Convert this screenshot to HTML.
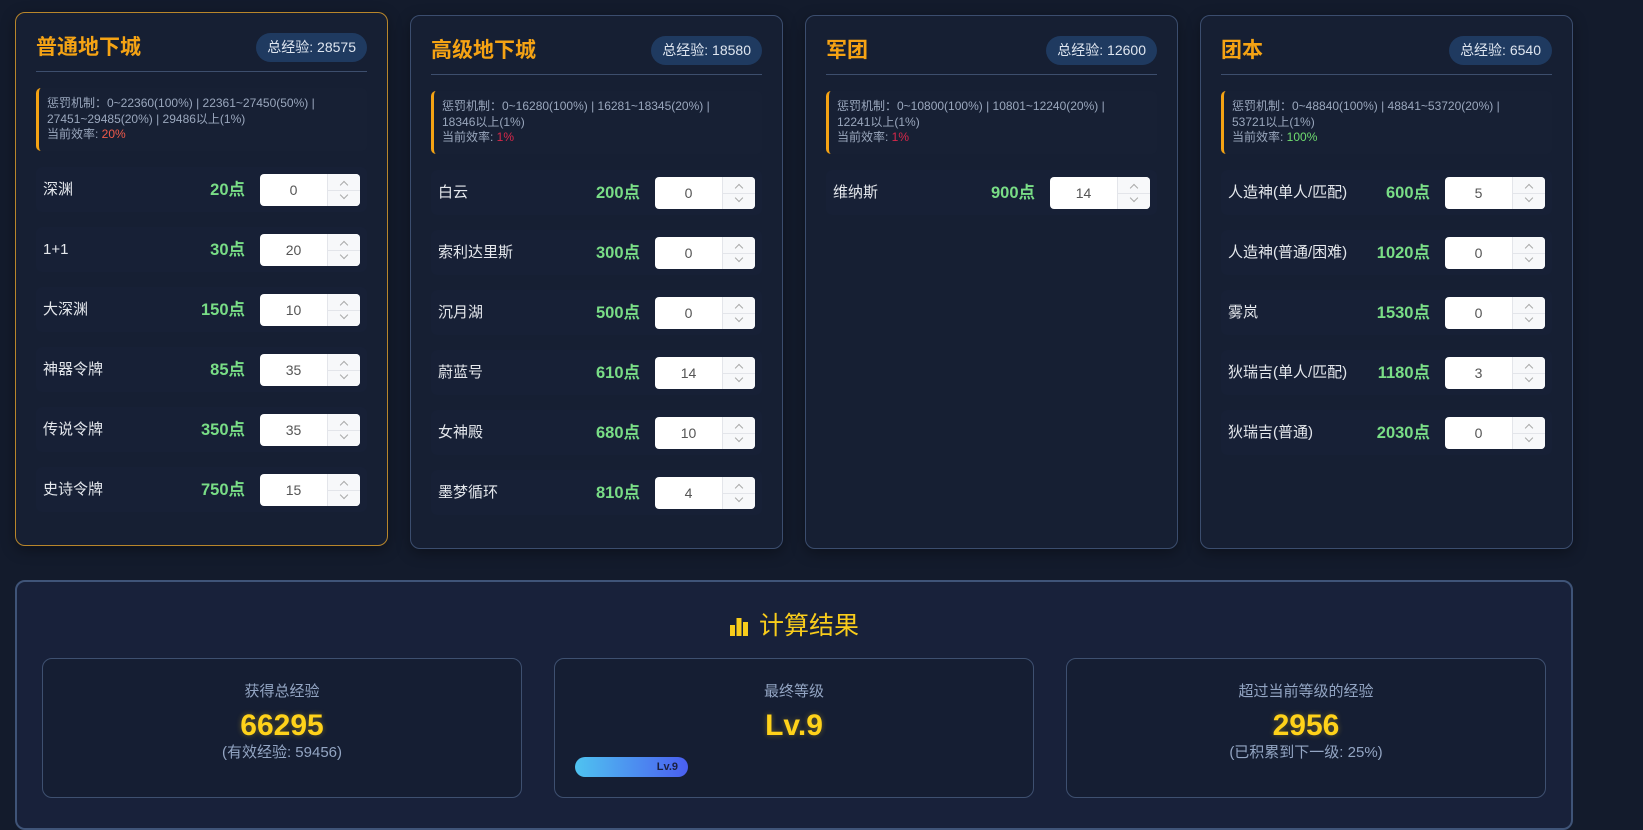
<!DOCTYPE html>
<html><head><meta charset="utf-8"><style>
*{box-sizing:border-box;margin:0;padding:0}
body{width:1643px;height:808px;overflow:hidden;background:#131b2c;font-family:"Liberation Sans","Noto Sans CJK SC",sans-serif;position:relative;color:#e6e9ef}
.card{position:absolute;top:15px;width:373px;height:534px;background:#161f33;border:1px solid #3b4d6e;border-radius:10px;padding:0 20px;box-shadow:0 4px 14px rgba(0,0,0,.35)}
.card.hov{top:12px;border-color:#b8862b}
.hd{height:59px;border-bottom:1px solid #3d4e6d;position:relative}
.t{position:absolute;left:0;top:22px;font-size:21px;font-weight:bold;color:#f5a314;line-height:26px}
.b{position:absolute;right:0;top:20px;height:29px;padding:0 11px;border-radius:15px;background:#1f3a60;font-size:14px;line-height:29px;color:#dfe6f0}
.info{margin-top:16px;height:63px;border-left:3px solid #f5a314;border-radius:5px;background:#172034;padding:8px 0 0 8px;font-size:12px;line-height:15.5px;color:#9aa7bd}
.rows{margin-top:16px}
.row{height:45px;margin-bottom:15px;background:#172036;border-radius:6px;display:flex;align-items:center;padding:0 7px;position:relative}
.lb{font-size:15px;color:#e4e7ec;flex:1;line-height:20px}
.pt{font-size:16.5px;font-weight:bold;color:#79dd86;margin-right:15px;line-height:20px}
.in{width:100px;height:32px;background:#fff;border-radius:4px;position:relative;font-size:14px;color:#555;line-height:32px}
.in span{position:absolute;left:0;width:67px;text-align:center}
.sp{position:absolute;right:0;top:0;width:33px;height:32px;border-left:1px solid #e3e5ea;background:#f7f8fa;border-radius:0 4px 4px 0}
.sp:before{content:"";position:absolute;left:0;right:0;top:16px;border-top:1px solid #e3e5ea}
.sp i{position:absolute;left:13px;width:6px;height:6px;border-left:1px solid #aaa;border-top:1px solid #aaa}
.sp i.u{top:8px;transform:rotate(45deg)}
.sp i.d{top:18px;transform:rotate(225deg)}
.res{position:absolute;left:15px;top:580px;width:1558px;height:250px;background:#18213a;border:2px solid #3f5478;border-radius:10px}
.rt{position:absolute;left:0;right:0;top:27px;text-align:center;font-size:25px;color:#f8cc1b;line-height:34px}
.box{position:absolute;top:76px;width:480px;height:140px;border:1px solid #3e5070;border-radius:10px;background:#151e33;text-align:center}
.l{margin-top:23px;font-size:15px;color:#93a5c3;line-height:20px}
.v{margin-top:7px;font-size:30px;font-weight:bold;color:#ffd21a;line-height:34px;text-shadow:0 0 6px rgba(255,210,26,.35)}
.s{font-size:15px;color:#93a5c3;line-height:20px}
.bar{position:absolute;left:20px;top:98px;width:113px;height:20px;border-radius:10px;background:linear-gradient(90deg,#4fc3f0,#4a5ff0);font-size:11px;font-weight:bold;color:#1a2040;text-align:right;padding-right:10px;line-height:20px}
</style></head><body>

<div class="card hov" style="left:15px">
<div class="hd"><div class="t">普通地下城</div><div class="b">总经验: 28575</div></div>
<div class="info">惩罚机制：0~22360(100%) | 22361~27450(50%) |<br>27451~29485(20%) | 29486以上(1%)<br>当前效率: <span style="color:#f05a4a">20%</span></div>
<div class="rows">
<div class="row"><div class="lb">深渊</div><div class="pt">20点</div><div class="in"><span>0</span><div class="sp"><i class="u"></i><i class="d"></i></div></div></div>
<div class="row"><div class="lb">1+1</div><div class="pt">30点</div><div class="in"><span>20</span><div class="sp"><i class="u"></i><i class="d"></i></div></div></div>
<div class="row"><div class="lb">大深渊</div><div class="pt">150点</div><div class="in"><span>10</span><div class="sp"><i class="u"></i><i class="d"></i></div></div></div>
<div class="row"><div class="lb">神器令牌</div><div class="pt">85点</div><div class="in"><span>35</span><div class="sp"><i class="u"></i><i class="d"></i></div></div></div>
<div class="row"><div class="lb">传说令牌</div><div class="pt">350点</div><div class="in"><span>35</span><div class="sp"><i class="u"></i><i class="d"></i></div></div></div>
<div class="row"><div class="lb">史诗令牌</div><div class="pt">750点</div><div class="in"><span>15</span><div class="sp"><i class="u"></i><i class="d"></i></div></div></div>
</div></div>

<div class="card" style="left:410px">
<div class="hd"><div class="t">高级地下城</div><div class="b">总经验: 18580</div></div>
<div class="info">惩罚机制：0~16280(100%) | 16281~18345(20%) |<br>18346以上(1%)<br>当前效率: <span style="color:#d8284a">1%</span></div>
<div class="rows">
<div class="row"><div class="lb">白云</div><div class="pt">200点</div><div class="in"><span>0</span><div class="sp"><i class="u"></i><i class="d"></i></div></div></div>
<div class="row"><div class="lb">索利达里斯</div><div class="pt">300点</div><div class="in"><span>0</span><div class="sp"><i class="u"></i><i class="d"></i></div></div></div>
<div class="row"><div class="lb">沉月湖</div><div class="pt">500点</div><div class="in"><span>0</span><div class="sp"><i class="u"></i><i class="d"></i></div></div></div>
<div class="row"><div class="lb">蔚蓝号</div><div class="pt">610点</div><div class="in"><span>14</span><div class="sp"><i class="u"></i><i class="d"></i></div></div></div>
<div class="row"><div class="lb">女神殿</div><div class="pt">680点</div><div class="in"><span>10</span><div class="sp"><i class="u"></i><i class="d"></i></div></div></div>
<div class="row"><div class="lb">墨梦循环</div><div class="pt">810点</div><div class="in"><span>4</span><div class="sp"><i class="u"></i><i class="d"></i></div></div></div>
</div></div>

<div class="card" style="left:805px">
<div class="hd"><div class="t">军团</div><div class="b">总经验: 12600</div></div>
<div class="info">惩罚机制：0~10800(100%) | 10801~12240(20%) |<br>12241以上(1%)<br>当前效率: <span style="color:#d8284a">1%</span></div>
<div class="rows">
<div class="row"><div class="lb">维纳斯</div><div class="pt">900点</div><div class="in"><span>14</span><div class="sp"><i class="u"></i><i class="d"></i></div></div></div>
</div></div>

<div class="card" style="left:1200px">
<div class="hd"><div class="t">团本</div><div class="b">总经验: 6540</div></div>
<div class="info">惩罚机制：0~48840(100%) | 48841~53720(20%) |<br>53721以上(1%)<br>当前效率: <span style="color:#6fdc6f">100%</span></div>
<div class="rows">
<div class="row"><div class="lb">人造神(单人/匹配)</div><div class="pt">600点</div><div class="in"><span>5</span><div class="sp"><i class="u"></i><i class="d"></i></div></div></div>
<div class="row"><div class="lb">人造神(普通/困难)</div><div class="pt">1020点</div><div class="in"><span>0</span><div class="sp"><i class="u"></i><i class="d"></i></div></div></div>
<div class="row"><div class="lb">雾岚</div><div class="pt">1530点</div><div class="in"><span>0</span><div class="sp"><i class="u"></i><i class="d"></i></div></div></div>
<div class="row"><div class="lb">狄瑞吉(单人/匹配)</div><div class="pt">1180点</div><div class="in"><span>3</span><div class="sp"><i class="u"></i><i class="d"></i></div></div></div>
<div class="row"><div class="lb">狄瑞吉(普通)</div><div class="pt">2030点</div><div class="in"><span>0</span><div class="sp"><i class="u"></i><i class="d"></i></div></div></div>
</div></div>

<div class="res">
<div class="rt"><svg width="20" height="20" viewBox="0 0 20 20" style="vertical-align:-2px;margin-right:10px"><rect x="1" y="9" width="5" height="11" fill="#f8cc1b"/><rect x="7.5" y="2" width="5" height="18" fill="#f8cc1b"/><rect x="14" y="6" width="5" height="14" fill="#f8cc1b"/></svg>计算结果</div>
<div class="box" style="left:25px"><div class="l">获得总经验</div><div class="v">66295</div><div class="s">(有效经验: 59456)</div></div>
<div class="box" style="left:537px"><div class="l">最终等级</div><div class="v">Lv.9</div><div class="bar">Lv.9</div></div>
<div class="box" style="left:1049px"><div class="l">超过当前等级的经验</div><div class="v">2956</div><div class="s">(已积累到下一级: 25%)</div></div>
</div>
</body></html>
